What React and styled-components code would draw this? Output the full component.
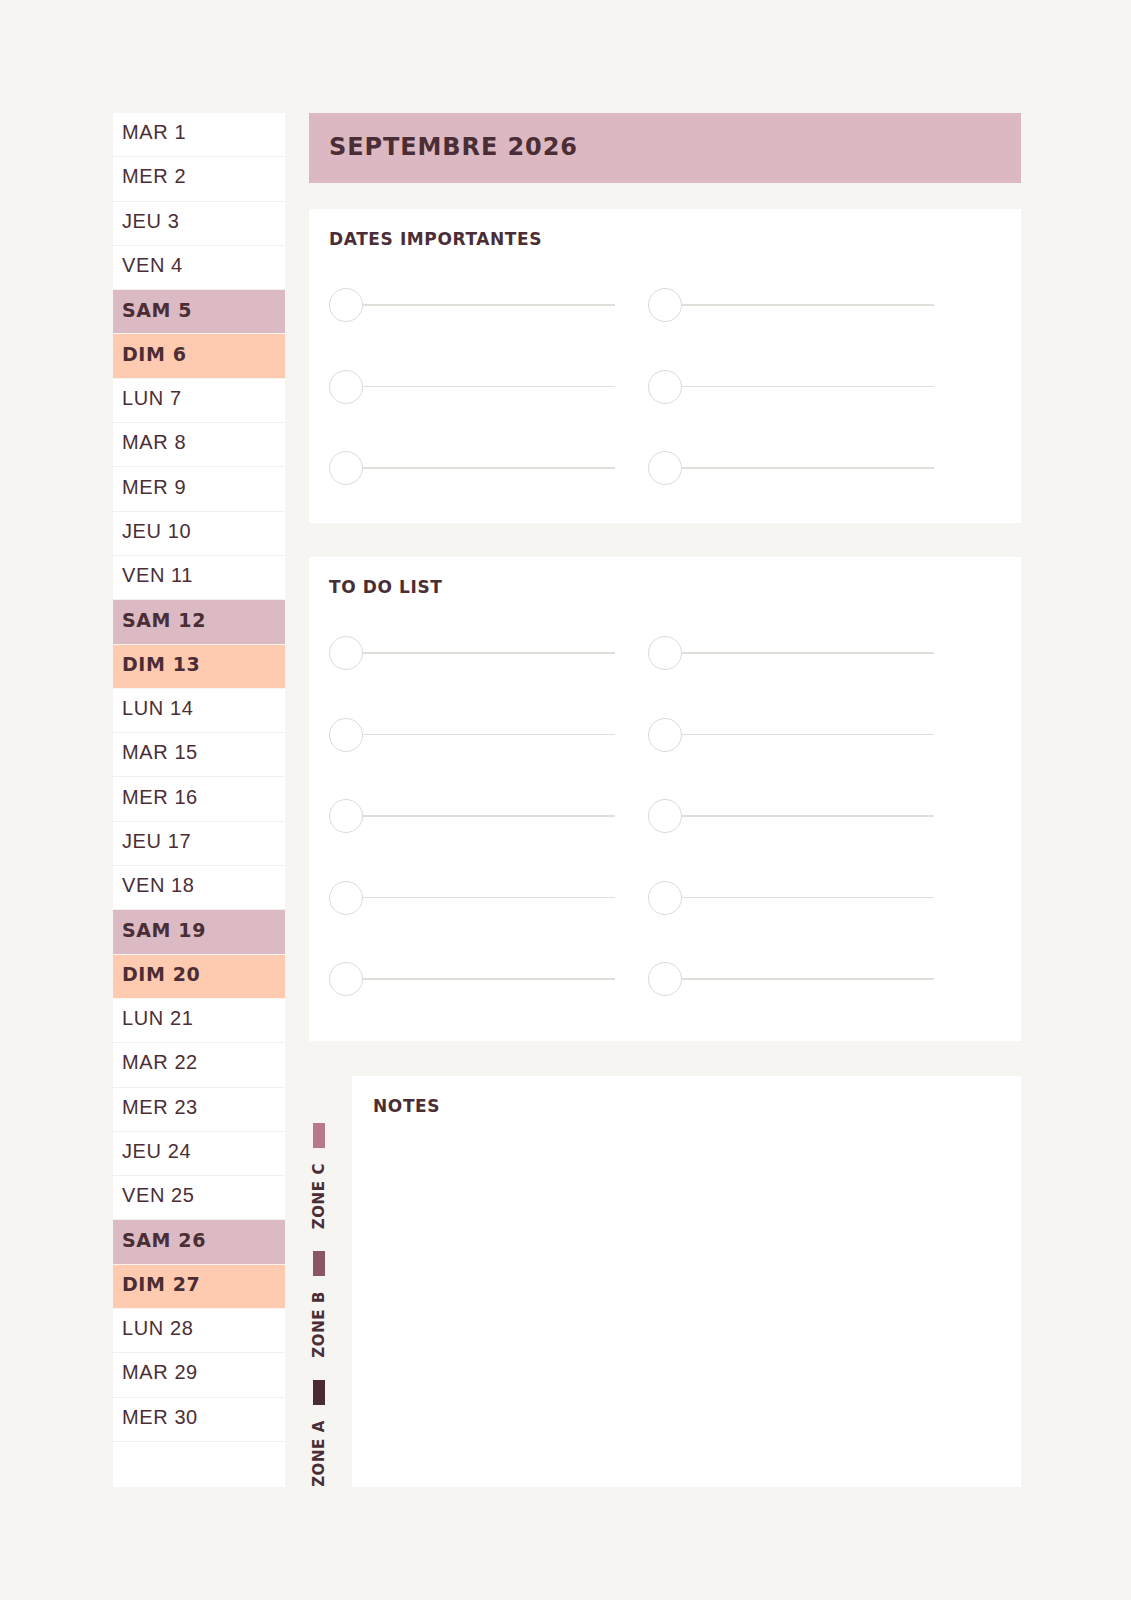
import React from "react";
import styled, { createGlobalStyle } from "styled-components";

const INK = "#4b2e35";
const HEAD = `"DejaVu Sans", "Noto Sans", sans-serif`;
const BODY = `"Liberation Sans", Arial, sans-serif`;

const GlobalStyle = createGlobalStyle`
  html, body {
    margin: 0;
    padding: 0;
    background: #f7f5f1;
  }
  * {
    box-sizing: border-box;
  }
`;

const DAY_NAMES = ["MAR", "MER", "JEU", "VEN", "SAM", "DIM", "LUN"];

const DAYS = Array.from({ length: 30 }, (_, i) => {
  const name = DAY_NAMES[i % 7];
  return { label: `${name} ${i + 1}`, kind: name === "SAM" ? "sat" : name === "DIM" ? "sun" : "" };
});

const ZONES = [
  { label: "ZONE C", color: "#b8788a" },
  { label: "ZONE B", color: "#8b5664" },
  { label: "ZONE A", color: "#4a2b31" },
];

const App = () => {
  return (
    <>
      <GlobalStyle />
      <Page>
        <Sidebar>
          {DAYS.map((day) => (
            <DayRow key={day.label} kind={day.kind}>
              {day.label}
            </DayRow>
          ))}
        </Sidebar>

        <Main>
          <Header>SEPTEMBRE 2026</Header>

          <Card $h={314}>
            <CardTitle>DATES IMPORTANTES</CardTitle>
            <CheckGrid>
              {Array.from({ length: 6 }, (_, i) => (
                <CheckItem key={i}>
                  <Circle />
                  <Line />
                </CheckItem>
              ))}
            </CheckGrid>
          </Card>

          <Card $h={484} $top={34}>
            <CardTitle>TO DO LIST</CardTitle>
            <CheckGrid>
              {Array.from({ length: 10 }, (_, i) => (
                <CheckItem key={i}>
                  <Circle />
                  <Line />
                </CheckItem>
              ))}
            </CheckGrid>
          </Card>

          <NotesRow>
            <Legend>
              {ZONES.map((zone) => (
                <LegendItem key={zone.label}>
                  <Swatch color={zone.color} />
                  <ZoneLabel>{zone.label}</ZoneLabel>
                </LegendItem>
              ))}
            </Legend>
            <NotesCard>
              <CardTitle>NOTES</CardTitle>
            </NotesCard>
          </NotesRow>
        </Main>
      </Page>
    </>
  );
};

const Page = styled.div`
  display: grid;
  grid-template-columns: 172px 712px;
  column-gap: 24px;
  padding: 113px 0 113px 113px;
  width: 1131px;
`;

const Sidebar = styled.div`
  background: #ffffff;
  display: flex;
  flex-direction: column;
`;

const DayRow = styled.div`
  height: 44.3px;
  display: flex;
  align-items: center;
  padding: 0 9px 4px;
  font-family: ${(p) => (p.kind ? HEAD : BODY)};
  font-weight: ${(p) => (p.kind ? 700 : 400)};
  font-size: ${(p) => (p.kind ? "19px" : "20px")};
  letter-spacing: ${(p) => (p.kind ? "0.6px" : "0.6px")};
  color: ${INK};
  background: ${(p) => (p.kind === "sat" ? "#dcbac3" : p.kind === "sun" ? "#fecbb1" : "#ffffff")};
  border-bottom: 1px solid ${(p) => (p.kind ? "#fbf3f1" : "#f3f0ec")};
`;

const Main = styled.div`
  display: flex;
  flex-direction: column;
`;

const Header = styled.div`
  height: 70px;
  background: #dcb9c2;
  display: flex;
  align-items: center;
  padding: 0 20px 2px;
  font-family: ${HEAD};
  font-weight: 700;
  font-size: 24px;
  letter-spacing: 0.9px;
  color: ${INK};
`;

const Card = styled.section`
  background: #ffffff;
  height: ${(p) => p.$h}px;
  margin-top: ${(p) => p.$top || 26}px;
  padding: 22px 20px 0;
`;

const CardTitle = styled.h2`
  margin: 0;
  font-family: ${HEAD};
  font-weight: 700;
  font-size: 17px;
  line-height: 17px;
  letter-spacing: 0.6px;
  color: ${INK};
`;

const CheckGrid = styled.div`
  display: grid;
  grid-template-columns: 286px 286px;
  column-gap: 33px;
  row-gap: 47.5px;
  margin-top: 40px;
`;

const CheckItem = styled.div`
  display: flex;
  align-items: center;
`;

const Circle = styled.span`
  width: 34px;
  height: 34px;
  border-radius: 50%;
  border: 1.5px solid #dedad4;
  flex-shrink: 0;
`;

const Line = styled.span`
  flex: 1;
  height: 1.5px;
  background: #e2dfda;
`;

const NotesRow = styled.div`
  display: flex;
  margin-top: 35px;
  height: 411px;
`;

const Legend = styled.div`
  width: 43px;
  display: flex;
  flex-direction: column;
  justify-content: flex-end;
  gap: 22px;
  padding-left: 3px;
`;

const LegendItem = styled.div`
  display: flex;
  flex-direction: column;
  align-items: flex-start;
  gap: 15px;
`;

const Swatch = styled.span`
  width: 12px;
  height: 25px;
  margin-left: 1px;
  background: ${(p) => p.color};
`;

const ZoneLabel = styled.span`
  writing-mode: vertical-rl;
  transform: rotate(180deg);
  font-family: ${HEAD};
  font-weight: 700;
  font-size: 15px;
  line-height: 14px;
  letter-spacing: 0.6px;
  color: ${INK};
`;

const NotesCard = styled.section`
  flex: 1;
  background: #ffffff;
  padding: 22px 21px 0;
`;

export default App;
